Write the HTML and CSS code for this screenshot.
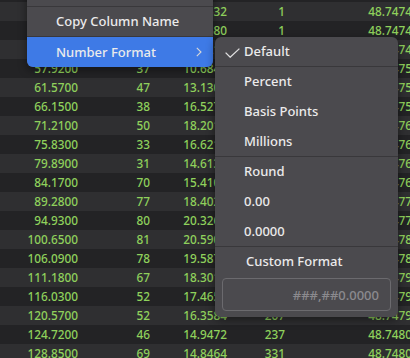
FILE: index.html
```html
<!DOCTYPE html>
<html>
<head>
    <meta charset="utf-8">
    <link rel="stylesheet" href="styles.css">
</head>
<body>

<div class="grid">
    <div class="row"><span></span><span></span><span></span><span></span><span></span></div>
    <div class="row"><span>52.8400</span><span>29</span><span>11.4532</span><span>1</span><span>48.7474</span></div>
    <div class="row"><span>54.1100</span><span>41</span><span>10.9680</span><span>1</span><span>48.7474</span></div>
    <div class="row"><span>55.6300</span><span>35</span><span>10.2211</span><span>1</span><span>48.7474</span></div>
    <div class="row"><span>57.9200</span><span>37</span><span>10.6841</span><span>3</span><span>48.7475</span></div>
    <div class="row"><span>61.5700</span><span>47</span><span>13.1302</span><span>5</span><span>48.7475</span></div>
    <div class="row"><span>66.1500</span><span>38</span><span>16.5277</span><span>8</span><span>48.7475</span></div>
    <div class="row"><span>71.2100</span><span>50</span><span>18.2019</span><span>12</span><span>48.7476</span></div>
    <div class="row"><span>75.8300</span><span>33</span><span>16.6215</span><span>17</span><span>48.7476</span></div>
    <div class="row"><span>79.8900</span><span>31</span><span>14.6133</span><span>24</span><span>48.7476</span></div>
    <div class="row"><span>84.1700</span><span>70</span><span>15.4108</span><span>35</span><span>48.7476</span></div>
    <div class="row"><span>89.2800</span><span>77</span><span>18.4027</span><span>49</span><span>48.7477</span></div>
    <div class="row"><span>94.9300</span><span>80</span><span>20.3266</span><span>68</span><span>48.7477</span></div>
    <div class="row"><span>100.6500</span><span>81</span><span>20.5904</span><span>91</span><span>48.7478</span></div>
    <div class="row"><span>106.0900</span><span>78</span><span>19.5871</span><span>118</span><span>48.7478</span></div>
    <div class="row"><span>111.1800</span><span>67</span><span>18.3016</span><span>146</span><span>48.7479</span></div>
    <div class="row"><span>116.0300</span><span>52</span><span>17.4650</span><span>177</span><span>48.7479</span></div>
    <div class="row"><span>120.5700</span><span>52</span><span>16.3584</span><span>207</span><span>48.7479</span></div>
    <div class="row"><span>124.7200</span><span>46</span><span>14.9472</span><span>237</span><span>48.7480</span></div>
    <div class="row"><span>128.8500</span><span>69</span><span>14.8464</span><span>331</span><span>48.7480</span></div>
</div>

<!-- context menu -->
<div class="menu">
    <div class="item sep">Hide Column</div>
    <div class="item sep">Copy Column Name</div>
    <div class="item active">
        Number Format
        <svg class="chev" width="6" height="10" viewBox="0 0 6 10"><polyline points="0.8,0.8 5,5 0.8,9.2" /></svg>
    </div>
</div>

<div class="submenu">
    <div class="item sep">
        <svg class="check" width="15" height="10" viewBox="0 0 15 10"><polyline points="0.6,4.6 5.2,9.2 14.4,0.6" /></svg>
        Default
    </div>
    <div class="item">Percent</div>
    <div class="item">Basis Points</div>
    <div class="item sep">Millions</div>
    <div class="item">Round</div>
    <div class="item">0.00</div>
    <div class="item sep">0.0000</div>
    <div class="item custom">Custom Format</div>
    <input class="fmt" type="text" placeholder="###,##0.0000">
</div>

</body>
</html>
```

FILE: styles.css
```css
html, body { margin: 0; padding: 0; }

body {
    width: 410px;
    height: 358px;
    overflow: hidden;
    background: #262628;
    font-family: "Noto Sans", "Open Sans", sans-serif;
    position: relative;
}

/* table behind the menus */
.grid {
    width: 412px;
    margin-top: -17px;
}
.row {
    display: grid;
    grid-template-columns: 78px 72px 77px 58px 127px;
    height: 19px;
    line-height: 19px;
    font-size: 11.8px;
    font-weight: 500;
    color: #8fd15c;
    background: #232325;
}
.row:nth-child(even) { background: #2f2f31; }
.row span { text-align: right; white-space: nowrap; }

/* menus */
.menu, .submenu {
    position: absolute;
    background: #4b4a4e;
    color: #ebebeb;
    font-size: 13px;
    font-weight: 500;
    box-shadow: 0 3px 10px rgba(0, 0, 0, 0.45);
}
.menu {
    left: 27px;
    top: -23px;
    width: 186px;
    border-radius: 0 0 6px 6px;
}
.submenu {
    left: 215px;
    top: 37px;
    width: 183px;
    height: 280px;
    box-sizing: border-box;
    border-radius: 6px;
    padding-bottom: 6px;
}

.item {
    position: relative;
    height: 30px;
    line-height: 29px;
    box-sizing: border-box;
    padding-left: 29px;
    white-space: nowrap;
}
.item.sep { border-bottom: 1px solid #39383b; }
.item.active {
    background: #3e7ae6;
    line-height: 30px;
    border-radius: 0 0 6px 6px;
}
.item.custom { padding-left: 31px; }

.chev {
    position: absolute;
    right: 11px;
    top: 10px;
    fill: none;
    stroke: #d8d8d8;
    stroke-width: 1.1;
}
.check {
    position: absolute;
    left: 10px;
    top: 11px;
    fill: none;
    stroke: #e0e0e0;
    stroke-width: 1.3;
}

.fmt {
    display: block;
    box-sizing: border-box;
    width: 169px;
    height: 33px;
    margin: 1px 0 0 7px;
    padding: 0 11px;
    background: #4b4a4e;
    border: 1px solid #6b6a6e;
    border-radius: 4px;
    text-align: right;
    font-family: "Noto Sans", "Open Sans", sans-serif;
    font-size: 13px;
    font-weight: 500;
    color: #e8e8e8;
    outline: none;
}
.fmt::placeholder { color: #8b8a8e; }
```
